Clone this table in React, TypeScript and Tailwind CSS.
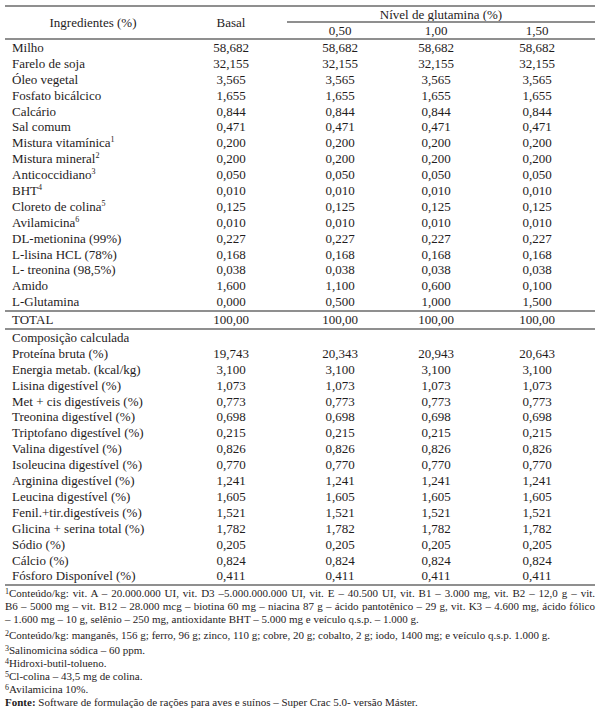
import React from 'react';

const cols = 'grid grid-cols-[176px_100px_6px_106px_86px_116px]';

type Row = { label: React.ReactNode; v: [string, string, string, string] };

const sup = (n: string) => <sup className="text-[8px] leading-none align-top relative top-[1px]">{n}</sup>;

const ingredients: Row[] = [
  { label: 'Milho', v: ['58,682', '58,682', '58,682', '58,682'] },
  { label: 'Farelo de soja', v: ['32,155', '32,155', '32,155', '32,155'] },
  { label: 'Óleo vegetal', v: ['3,565', '3,565', '3,565', '3,565'] },
  { label: 'Fosfato bicálcico', v: ['1,655', '1,655', '1,655', '1,655'] },
  { label: 'Calcário', v: ['0,844', '0,844', '0,844', '0,844'] },
  { label: 'Sal comum', v: ['0,471', '0,471', '0,471', '0,471'] },
  { label: <>Mistura vitamínica{sup('1')}</>, v: ['0,200', '0,200', '0,200', '0,200'] },
  { label: <>Mistura mineral{sup('2')}</>, v: ['0,200', '0,200', '0,200', '0,200'] },
  { label: <>Anticoccidiano{sup('3')}</>, v: ['0,050', '0,050', '0,050', '0,050'] },
  { label: <>BHT{sup('4')}</>, v: ['0,010', '0,010', '0,010', '0,010'] },
  { label: <>Cloreto de colina{sup('5')}</>, v: ['0,125', '0,125', '0,125', '0,125'] },
  { label: <>Avilamicina{sup('6')}</>, v: ['0,010', '0,010', '0,010', '0,010'] },
  { label: 'DL-metionina (99%)', v: ['0,227', '0,227', '0,227', '0,227'] },
  { label: 'L-lisina HCL (78%)', v: ['0,168', '0,168', '0,168', '0,168'] },
  { label: 'L- treonina (98,5%)', v: ['0,038', '0,038', '0,038', '0,038'] },
  { label: 'Amido', v: ['1,600', '1,100', '0,600', '0,100'] },
  { label: 'L-Glutamina', v: ['0,000', '0,500', '1,000', '1,500'] },
];

const composition: Row[] = [
  { label: 'Proteína bruta (%)', v: ['19,743', '20,343', '20,943', '20,643'] },
  { label: 'Energia metab. (kcal/kg)', v: ['3,100', '3,100', '3,100', '3,100'] },
  { label: 'Lisina digestível (%)', v: ['1,073', '1,073', '1,073', '1,073'] },
  { label: 'Met + cis digestíveis (%)', v: ['0,773', '0,773', '0,773', '0,773'] },
  { label: 'Treonina digestível (%)', v: ['0,698', '0,698', '0,698', '0,698'] },
  { label: 'Triptofano digestível (%)', v: ['0,215', '0,215', '0,215', '0,215'] },
  { label: 'Valina digestível (%)', v: ['0,826', '0,826', '0,826', '0,826'] },
  { label: 'Isoleucina digestível (%)', v: ['0,770', '0,770', '0,770', '0,770'] },
  { label: 'Arginina digestível (%)', v: ['1,241', '1,241', '1,241', '1,241'] },
  { label: 'Leucina digestível (%)', v: ['1,605', '1,605', '1,605', '1,605'] },
  { label: 'Fenil.+tir.digestíveis (%)', v: ['1,521', '1,521', '1,521', '1,521'] },
  { label: 'Glicina + serina total (%)', v: ['1,782', '1,782', '1,782', '1,782'] },
  { label: 'Sódio (%)', v: ['0,205', '0,205', '0,205', '0,205'] },
  { label: 'Cálcio (%)', v: ['0,824', '0,824', '0,824', '0,824'] },
  { label: 'Fósforo Disponível (%)', v: ['0,411', '0,411', '0,411', '0,411'] },
];

function Rule() {
  return <div className="h-[2px] bg-[#8f8f8f]" />;
}

function DataRow({ row }: { row: Row }) {
  return (
    <div className={`${cols} h-[15.9px] leading-[15.9px]`}>
      <div className="pl-[7px] whitespace-nowrap">{row.label}</div>
      <div className="text-center">{row.v[0]}</div>
      <div />
      <div className="text-center">{row.v[1]}</div>
      <div className="text-center">{row.v[2]}</div>
      <div className="text-center">{row.v[3]}</div>
    </div>
  );
}

export default function App() {
  return (
    <div
      className="w-[600px] h-[717px] bg-white text-[#1f1c1d] text-[13px] px-[5px] pt-[5px] overflow-hidden"
      style={{ fontFamily: '"Liberation Serif", "Times New Roman", serif' }}
    >
      <Rule />
      {/* header */}
      <div className={`${cols} grid-rows-[14px_2px_15px]`}>
        <div className="row-span-3 flex items-center justify-center">Ingredientes (%)</div>
        <div className="row-span-3 flex items-center justify-center">Basal</div>
        <div className="row-span-3" />
        <div className="col-span-3 text-center leading-[14px] pt-[1px]">Nível de glutamina (%)</div>
        <div className="col-span-3 bg-[#8f8f8f]" />
        <div className="text-center leading-[15px]">0,50</div>
        <div className="text-center leading-[15px]">1,00</div>
        <div className="text-center leading-[15px]">1,50</div>
      </div>
      <Rule />
      <div>
        {ingredients.map((r, i) => (
          <DataRow key={i} row={r} />
        ))}
      </div>
      <Rule />
      <DataRow row={{ label: 'TOTAL', v: ['100,00', '100,00', '100,00', '100,00'] }} />
      <Rule />
      <div className="h-[15.9px] leading-[15.9px] pl-[7px]">Composição calculada</div>
      {composition.map((r, i) => (
        <DataRow key={i} row={r} />
      ))}
      <Rule />
      {/* footnotes */}
      <div className="text-[11px] leading-[12.8px] pt-[1px]">
        <div className="text-justify [text-align-last:justify]">
          {sup('1')}Conteúdo/kg: vit. A – 20.000.000 UI, vit. D3 –5.000.000.000 UI, vit. E – 40.500 UI, vit. B1 – 3.000 mg, vit. B2 – 12,0 g – vit.
        </div>
        <div className="text-justify [text-align-last:justify]">
          B6 – 5000 mg – vit. B12 – 28.000 mcg – biotina 60 mg – niacina 87 g – ácido pantotênico – 29 g, vit. K3 – 4.600 mg, ácido fólico
        </div>
        <div>– 1.600 mg – 10 g, selênio – 250 mg, antioxidante BHT – 5.000 mg e veículo q.s.p. – 1.000 g.</div>
        <div className="mt-[3px]">
          {sup('2')}Conteúdo/kg: manganês, 156 g; ferro, 96 g; zinco, 110 g; cobre, 20 g; cobalto, 2 g; iodo, 1400 mg; e veículo q.s.p. 1.000 g.
        </div>
        <div className="mt-[3px]">{sup('3')}Salinomicina sódica – 60 ppm.</div>
        <div>{sup('4')}Hidroxi-butil-tolueno.</div>
        <div>{sup('5')}Cl-colina – 43,5 mg de colina.</div>
        <div>{sup('6')}Avilamicina 10%.</div>
        <div>
          <span className="font-bold">Fonte:</span> Software de formulação de rações para aves e suínos – Super Crac 5.0- versão Máster.
        </div>
      </div>
    </div>
  );
}
